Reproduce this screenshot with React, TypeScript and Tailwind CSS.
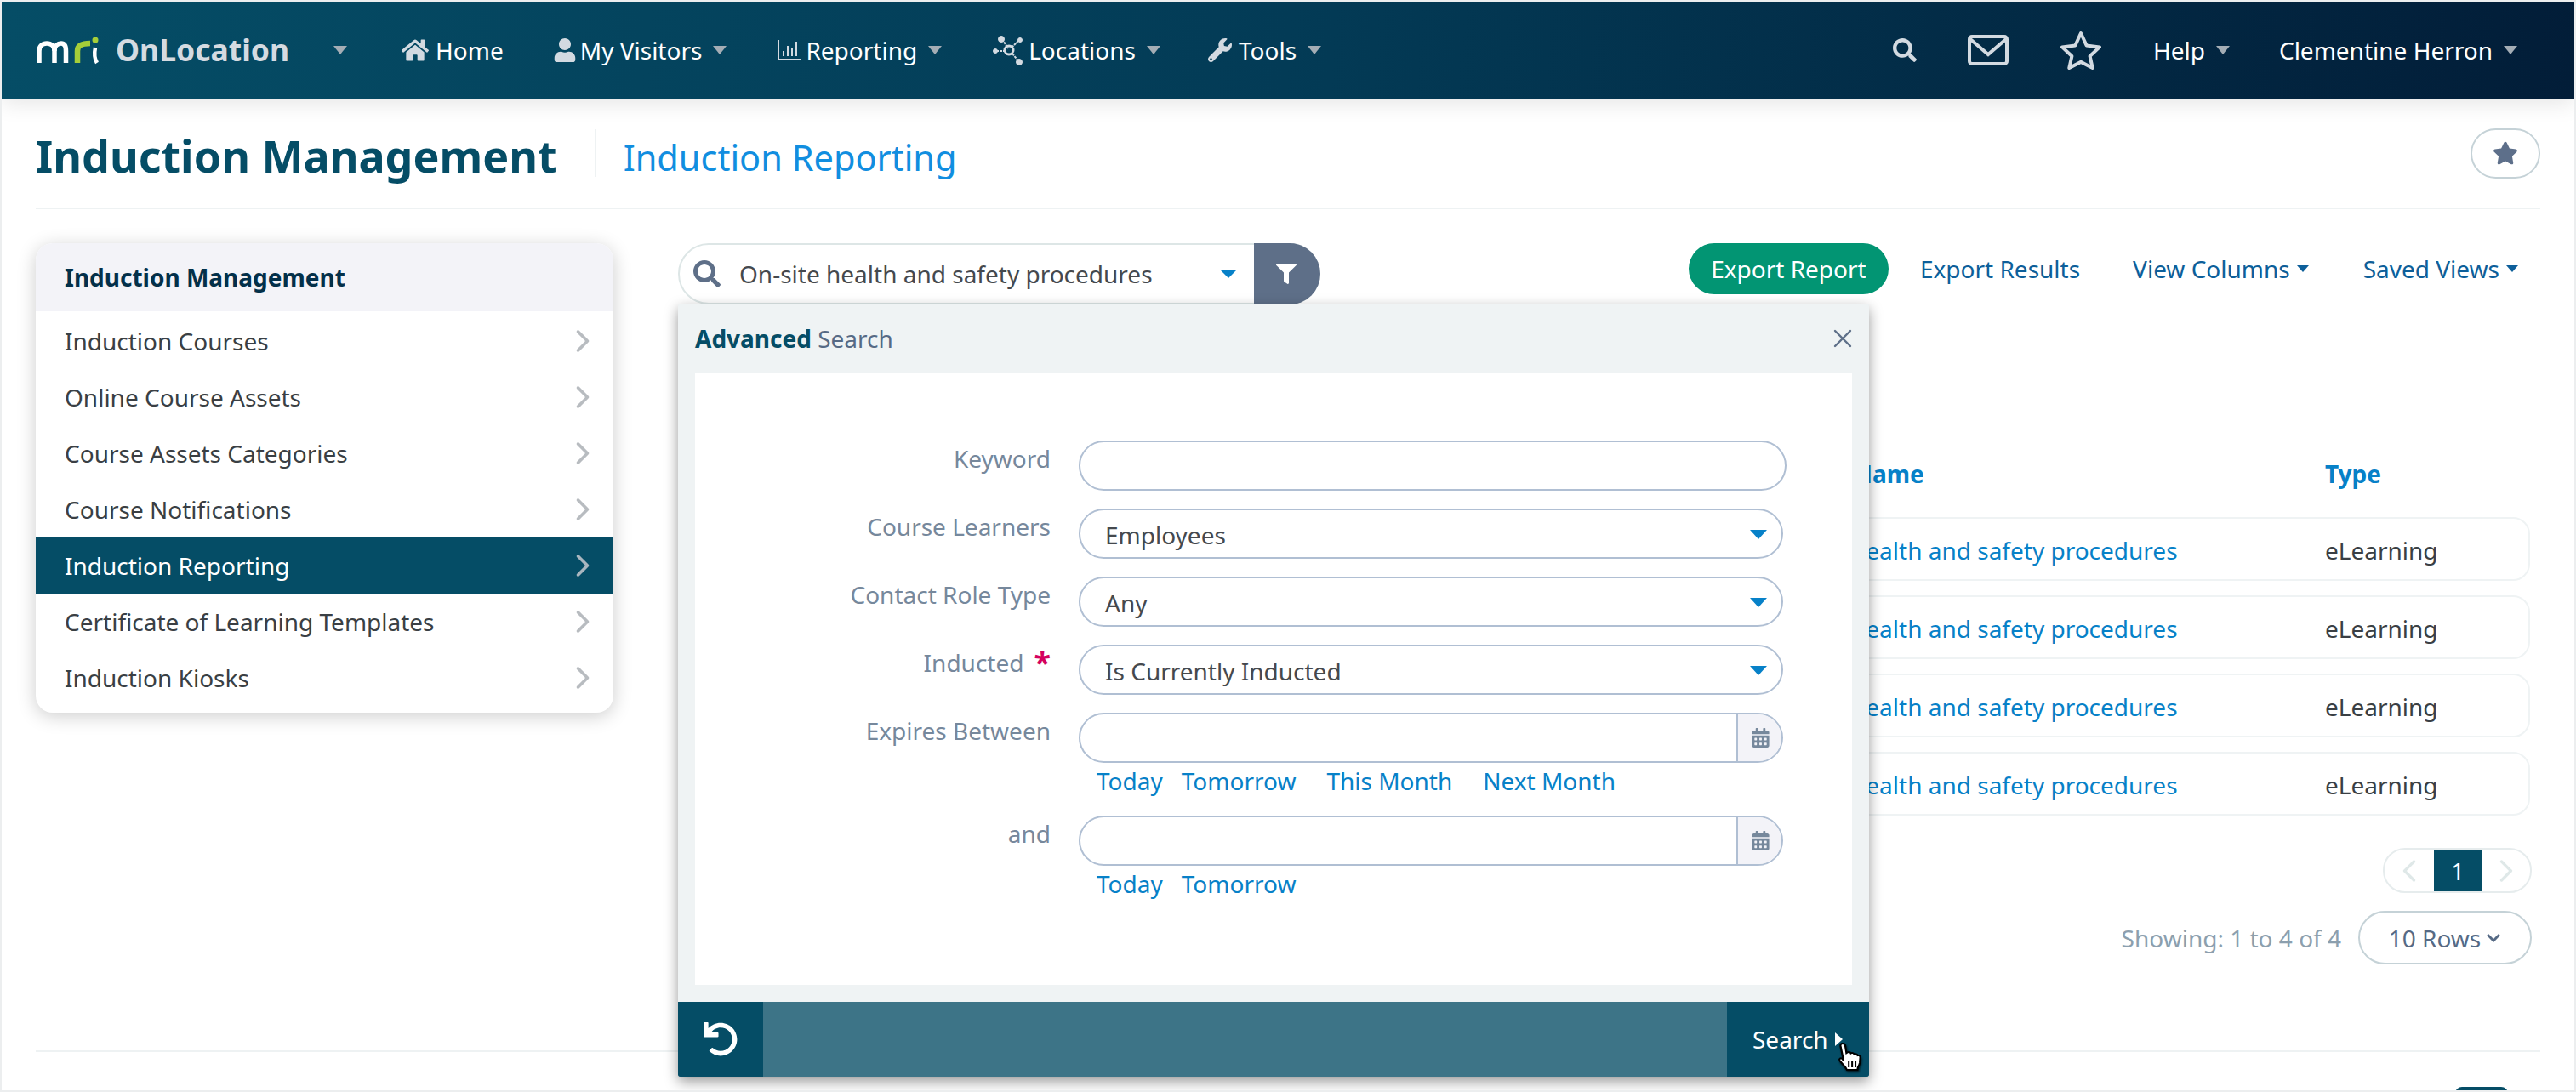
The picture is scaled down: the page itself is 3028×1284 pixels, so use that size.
import type { ReactNode } from "react";
import {
  FaHome,
  FaUser,
  FaWrench,
  FaSearch,
  FaStar,
  FaFilter,
  FaCalendarAlt,
  FaChevronDown,
  FaUndo,
} from "react-icons/fa";
import { LuChevronRight, LuChevronLeft, LuX } from "react-icons/lu";

const SIDE_ITEMS = [
  "Induction Courses",
  "Online Course Assets",
  "Course Assets Categories",
  "Course Notifications",
  "Induction Reporting",
  "Certificate of Learning Templates",
  "Induction Kiosks",
];

function Caret({ className = "border-t-[#a4adb5]" }: { className?: string }) {
  return <span className={`inline-block w-0 h-0 border-x-[8px] border-x-transparent border-t-[10px] ${className}`} />;
}

function MriLogo() {
  return (
    <svg width="78" height="36" viewBox="0 0 78 36" fill="none" strokeWidth="5.500">
      <path d="M4 33V19c0-6 4-9 9-9s9 3 9 9v14" stroke="#fff" />
      <path d="M22 19c0-6 4-9 8-9s5.500 3 5.500 9v14" stroke="#fff" />
      <path d="M49 33V19c0-6 4-9 15-9" stroke="#a6ce39" strokeWidth="6.500" />
      <circle cx="70" cy="6" r="3.500" fill="#a6ce39" />
      <path d="M70 15c-1.500 7-1 13 2 18" stroke="#fff" strokeWidth="4.500" />
    </svg>
  );
}

function ChartIcon() {
  return (
    <svg width="30" height="28" viewBox="0 0 30 28" fill="none" stroke="#d3dae1" strokeWidth="2">
      <path d="M2 2v23h27" />
      <path d="M8 21v-6M13 21V9M18 21v-9M23 21V4" />
    </svg>
  );
}

function NetworkIcon() {
  return (
    <svg width="36" height="36" viewBox="0 0 36 36" fill="#d3dae1" stroke="#d3dae1">
      <path d="M11 5l7 11M23 22l8 10M30 7l-7 7M4 19h9" strokeWidth="2" strokeDasharray="3 1" fill="none" />
      <circle cx="10" cy="5" r="3.500" />
      <circle cx="3" cy="19" r="2.500" />
      <circle cx="32" cy="6" r="2.500" />
      <circle cx="31" cy="32" r="3.500" />
      <circle cx="19" cy="18" r="5" fill="none" strokeWidth="3" />
    </svg>
  );
}

function EnvelopeIcon() {
  return (
    <svg width="48" height="36" viewBox="0 0 48 36" fill="none" stroke="#d3dae1" strokeWidth="4">
      <rect x="2" y="2" width="44" height="32" rx="3" />
      <path d="M3 5l21 18L45 5" />
    </svg>
  );
}

function StarOutline() {
  return (
    <svg width="50" height="46" viewBox="0 0 50 46" fill="none" stroke="#d3dae1" strokeWidth="4" strokeLinejoin="round">
      <path d="M25 3l6.600 14.400L47 19.400 35.600 30 38.700 44 25 36.900 11.300 44 14.400 30 3 19.400l15.400-2z" />
    </svg>
  );
}

function HandCursor() {
  return (
    <svg width="36" height="36" viewBox="0 0 32 36" preserveAspectRatio="none" className="drop-shadow-[1px_2px_1px_rgba(0,0,0,0.6)]">
      <path
        d="M7 2c1.600 0 2.600 1 2.800 2.600l1.200 8.600 1-.8c1.200-.8 3-.4 3.600 1 1.200-.8 3-.4 3.600 1.200 1.200-.6 3-.2 3.500 1.400 1.200-.4 2.800.4 2.800 2.200l-.5 6.500c-.3 2.200-1.200 3.600-2 5.400l-.4 3H11.500l-1.500-3c-1.500-2.200-4-5-6-8-1-1.800.8-3.500 2.400-2.400L8 22 4.800 4.800C4.600 3.200 5.400 2 7 2z"
        fill="#fff"
        stroke="#000"
        strokeWidth="2"
      />
      <path d="M13.500 22v8M17 22v8M20.500 22v8" stroke="#000" strokeWidth="1.800" />
    </svg>
  );
}

function NavItem({ icon, label, gap = "gap-[8px]", className = "" }: { icon: ReactNode; label: string; gap?: string; className?: string }) {
  return (
    <div className={`flex items-center ${className}`}>
      <span className={`flex items-center ${gap} text-white`}>
        {icon}
        {label}
      </span>
      <span className="ml-[13px] flex"><Caret /></span>
    </div>
  );
}

function SideMenu() {
  return (
    <aside className="w-[679px] h-[552px] shrink-0 rounded-[20px] bg-white shadow-[0_4px_22px_rgba(0,0,0,0.2)] overflow-hidden">
      <div className="h-[80px] pl-[34px] flex items-center bg-[#f3f3f8] font-bold text-[#03304a]">Induction Management</div>
      <ul className="pt-[2px]">
        {SIDE_ITEMS.map((item) => {
          const active = item === "Induction Reporting";
          return (
            <li
              key={item}
              className={`flex items-center justify-between pl-[34px] pr-[14px] ${
                active ? "h-[68px] -my-[1px] bg-[#054d66] text-white" : "h-[66px] text-[#3a3f44]"
              }`}
            >
              {item}
              <LuChevronRight size={44} strokeWidth={2} className={active ? "text-[#a9b6bf]" : "text-[#b8bcc0]"} />
            </li>
          );
        })}
      </ul>
    </aside>
  );
}

function Field({ label, children, req }: { label: string; children: ReactNode; req?: boolean }) {
  return (
    <div className="flex">
      <div className="w-[418px] pt-[2px] leading-[38px] text-right text-[#76889c] relative">
        {label}
        {req && <span className="ml-[12px] inline-block h-[38px] align-top text-[#d4015f] text-[36px] font-bold leading-[38px]">*</span>}
      </div>
      <div className="ml-[33px]">{children}</div>
    </div>
  );
}

function SelectBox({ value }: { value: string }) {
  return (
    <div className="w-[828px] h-[59px] pl-[29px] pr-[17px] pt-[2px] flex items-center justify-between rounded-[30px] border-2 border-[#b0bfd3] text-[#45494e]">
      {value}
      <span className="inline-block w-0 h-0 border-x-[10px] border-x-transparent border-t-[11px] border-t-[#0781c8]" />
    </div>
  );
}

function DateBox({ links }: { links: [string, number][] }) {
  return (
    <div>
      <div className="w-[828px] h-[59px] flex rounded-[30px] border-2 border-[#b0bfd3] overflow-hidden">
        <div className="flex-1" />
        <div className="w-[53px] flex items-center justify-center pl-[2px] bg-[#f3f3f8] border-l-2 border-[#b0bfd3]">
          <FaCalendarAlt size={23} className="text-[#76889c]" />
        </div>
      </div>
      <div className="h-[41px] flex items-center text-[#0781c8]">
        {links.map(([text, width]) => (
          <span key={text} className="shrink-0" style={{ marginLeft: width }}>{text}</span>
        ))}
      </div>
    </div>
  );
}

function AdvancedSearch() {
  return (
    <div className="absolute left-[-2px] top-[69px] z-10 w-[1400px] h-[909px] flex flex-col rounded-[3px] bg-[#eff3f4] shadow-[0_6px_16px_rgba(0,0,0,0.4)]">
      <div className="h-[81px] pl-[20px] pr-[13px] flex items-center justify-between">
        <span>
          <b className="text-[#054d66]">Advanced</b> <span className="text-[#566a85]">Search</span>
        </span>
        <LuX size={36} strokeWidth={1.600} className="text-[#5e6f88]" />
      </div>
      <div className="mx-[20px] h-[720px] bg-white pt-[80px] flex flex-col gap-[21px]">
        <Field label="Keyword">
          <div className="w-[832px] h-[59px] rounded-[30px] border-2 border-[#b0bfd3]" />
        </Field>
        <Field label="Course Learners"><SelectBox value="Employees" /></Field>
        <Field label="Contact Role Type"><SelectBox value="Any" /></Field>
        <Field label="Inducted" req><SelectBox value="Is Currently Inducted" /></Field>
        <Field label="Expires Between">
          <DateBox links={[["Today", 21], ["Tomorrow", 22], ["This Month", 36], ["Next Month", 36]]} />
        </Field>
        <Field label="and">
          <DateBox links={[["Today", 21], ["Tomorrow", 22]]} />
        </Field>
      </div>
      <div className="mt-[20px] h-[88px] flex justify-between bg-[#3d7487] text-white rounded-b-[3px] overflow-visible">
        <div className="w-[100px] flex items-center justify-center bg-[#054d66] rounded-bl-[3px]">
          <FaUndo size={40} />
        </div>
        <div className="relative w-[167px] pl-[30px] flex items-center bg-[#054d66] rounded-br-[3px]">
          Search
          <span className="ml-[8px] inline-block w-0 h-0 border-y-[8px] border-y-transparent border-l-[9px] border-l-white" />
          <span className="absolute left-[128px] top-[47px]"><HandCursor /></span>
        </div>
      </div>
    </div>
  );
}

function ResultsTable() {
  return (
    <div className="mt-[160px] pr-[12px]">
      <div className="flex h-[90px] pb-[12px] items-center pl-[1277px] font-bold text-[#0781c8]">
        <div className="w-[659px]">Course Name</div>
        <div>Type</div>
      </div>
      <div className="flex flex-col gap-[17px]">
        {[0, 1, 2, 3].map((i) => (
          <div key={i} className="h-[75px] flex items-center pl-[1275px] rounded-[20px] border-2 border-[#eff3f4] pt-[2px]">
            <div className="w-[659px] text-[#0781c8]">On-site health and safety procedures</div>
            <div className="text-[#3a3f44]">eLearning</div>
          </div>
        ))}
      </div>
      <div className="mt-[38px] flex flex-col items-end -mr-[2px]">
        <div className="w-[175px] h-[53px] flex items-center justify-between rounded-[26px] border-2 border-[#e6eced] overflow-hidden">
          <LuChevronLeft size={44} strokeWidth={1.800} className="ml-[7px] text-[#dfe8e8]" />
          <div className="w-[56px] h-full flex items-center justify-center bg-[#054d66] text-white">1</div>
          <LuChevronRight size={44} strokeWidth={1.800} className="mr-[6px] text-[#dfe8e8]" />
        </div>
        <div className="mt-[21px] flex items-center">
          <span className="text-[#8c9fae]">Showing: 1 to 4 of 4</span>
          <div className="ml-[20px] w-[204px] h-[63px] flex items-center justify-center gap-[6px] rounded-[32px] border-2 border-[#c5d2d7] text-[#566a85]">
            10 Rows <FaChevronDown size={18} />
          </div>
        </div>
      </div>
    </div>
  );
}

export default function App() {
  return (
    <div className="relative w-[3028px] h-[1284px] overflow-hidden bg-white border-2 border-[#eceeef] text-[28px] font-['Noto_Sans',sans-serif]">
      {/* top nav */}
      <nav className="h-[114px] flex items-center pl-[40px] pr-[67px] bg-[linear-gradient(95deg,#054d66,#033b56_50%,#021d38)] shadow-[0_6px_24px_rgba(0,0,0,0.1)]">
        <MriLogo />
        <span className="ml-[16px] text-[35.500px] font-bold text-[#d5dbe1]">OnLocation</span>
        <span className="ml-[52px] flex"><Caret /></span>
        <div className="ml-[64px] flex items-center text-white"><FaHome size={32} className="text-[#d3dae1] mr-[8px]" />Home</div>
        <NavItem className="ml-[58px]" gap="gap-[4px]" icon={<FaUser size={28} className="text-[#d3dae1]" />} label="My Visitors" />
        <NavItem className="ml-[59px]" gap="gap-[4px]" icon={<ChartIcon />} label="Reporting" />
        <NavItem className="ml-[60px]" gap="gap-[6px]" icon={<NetworkIcon />} label="Locations" />
        <NavItem className="ml-[56px]" icon={<FaWrench size={28} className="text-[#d3dae1]" />} label="Tools" />
        <div className="ml-auto flex items-center">
          <FaSearch size={28} className="text-[#d3dae1] mr-[60px]" />
          <span className="mr-[60px] flex"><EnvelopeIcon /></span>
          <span className="mr-[60px] flex"><StarOutline /></span>
          <NavItem icon={null} label="Help" />
          <NavItem className="ml-[58px]" icon={null} label="Clementine Herron" />
        </div>
      </nav>

      <div className="mx-[40px]">
        {/* page title */}
        <header className="h-[130px] flex items-center border-b-2 border-[#eef2f3]">
          <h1 className="mt-[6px] text-[52px] font-bold text-[#054d66]">Induction Management</h1>
          <div className="ml-[44px] h-[56px] w-[2px] bg-[#eef2f3]" />
          <h2 className="ml-[32px] mt-[10px] text-[41.500px] text-[#118ee0]">Induction Reporting</h2>
          <button className="ml-auto w-[82px] h-[59px] flex items-center justify-center rounded-[30px] border-2 border-[#c5d2d7]">
            <FaStar size={30} className="text-[#5d6f8a]" />
          </button>
        </header>

        {/* main */}
        <div className="mt-[40px] flex gap-[76px]">
          <SideMenu />
          <div className="flex-1 min-w-0">
            <div className="flex items-start">
              <div className="relative w-[755px] h-[72px] flex rounded-[36px] border-2 border-[#dde6e6]">
                <div className="flex-1 pl-[16px] pr-[20px] flex items-center text-[#45494e]">
                  <FaSearch size={32} className="text-[#5e6f88] mr-[22px]" />
                  <span className="flex-1">On-site health and safety procedures</span>
                  <span className="inline-block w-0 h-0 border-x-[10px] border-x-transparent border-t-[10px] border-t-[#0781c8]" />
                </div>
                <div className="w-[78px] -my-[2px] -mr-[2px] flex items-center justify-center pr-[2px] rounded-r-[36px] bg-[#5e6f88]">
                  <FaFilter size={24} className="text-white" />
                </div>
                <AdvancedSearch />
              </div>
              <div className="ml-auto flex items-center h-[60px] pr-[26px]">
                <span className="w-[235px] h-[60px] flex items-center justify-center rounded-[30px] bg-[#029573] text-white">Export Report</span>
                <span className="ml-[37px] text-[#0d5f9a]">Export Results</span>
                <span className="ml-[62px] text-[#0d5f9a]">View Columns</span>
                <span className="ml-[8px] inline-block w-0 h-0 border-x-[7px] border-x-transparent border-t-[8px] border-t-[#0d5f9a]" />
                <span className="ml-[64px] text-[#0d5f9a]">Saved Views</span>
                <span className="ml-[8px] inline-block w-0 h-0 border-x-[7px] border-x-transparent border-t-[8px] border-t-[#0d5f9a]" />
              </div>
            </div>
            <ResultsTable />
          </div>
        </div>
      </div>

      {/* bottom rule and the top of the next button */}
      <div className="absolute left-[40px] right-[40px] top-[1233px] h-[2px] bg-[#eef2f3]" />
      <div className="absolute left-[2884px] top-[1276px] w-[62px] h-[10px] rounded-t-[8px] bg-[#054d66]" />
    </div>
  );
}
